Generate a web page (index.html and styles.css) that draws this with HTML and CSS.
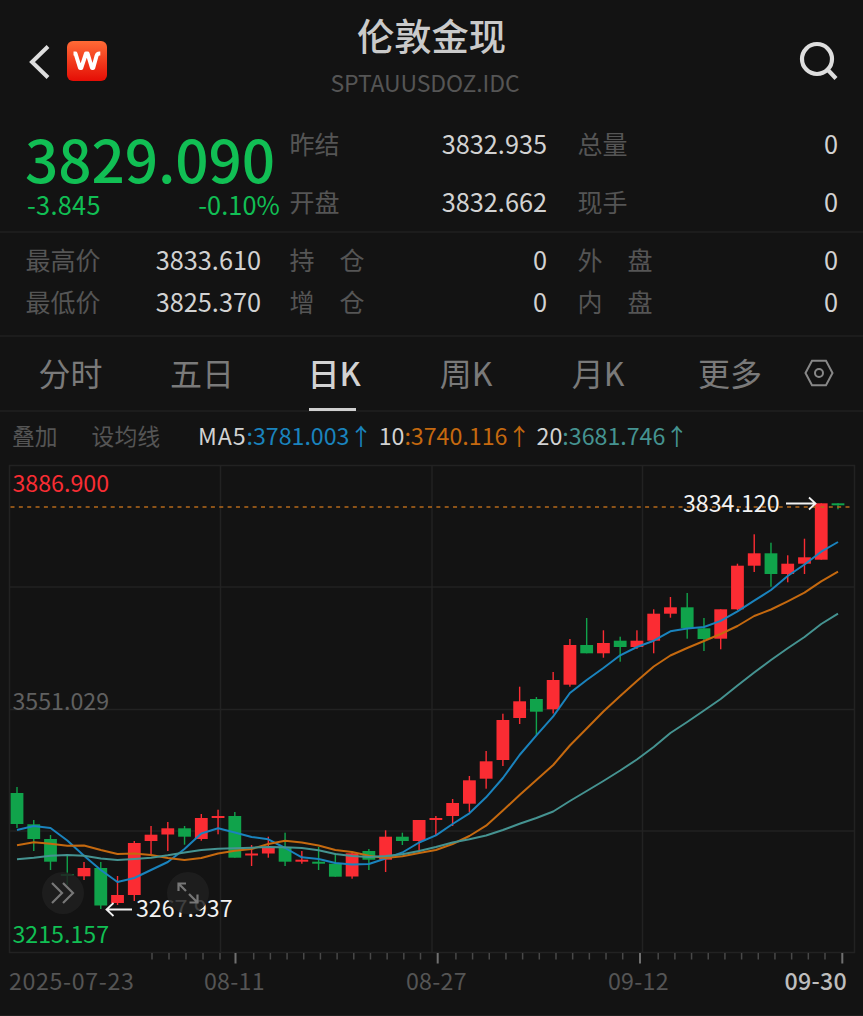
FILE: index.html
```
<!DOCTYPE html>
<html lang="zh-CN">
<head>
    <meta charset="UTF-8">
    <meta name="viewport" content="width=device-width, initial-scale=1.0">
    <title>伦敦金现</title>
    <link rel="stylesheet" href="styles.css">
</head>
<body>
    <header class="header">
        <div class="header-left">
            <svg class="back" width="22" height="36" viewBox="0 0 22 36"><path d="M20 2.5 4 18l16 15.500" /></svg>
            <svg class="logo" width="40" height="40" viewBox="0 0 40 40">
                <defs>
                    <linearGradient id="logo-bg" x1="0" y1="0" x2="0" y2="1">
                        <stop offset="0" stop-color="#ff6b36" />
                        <stop offset="1" stop-color="#e50d05" />
                    </linearGradient>
                </defs>
                <rect width="40" height="40" rx="6" fill="url(#logo-bg)" />
                <path d="M6.500 12.500h2L13 27h1.200L19 12.500h1.600L25 27h1.200L29.500 15q.7-2.500 3-2.500h.8" />
            </svg>
        </div>
        <div class="title">
            <h1>伦敦金现</h1>
            <p>SPTAUUSDOZ.IDC</p>
        </div>
        <svg class="search" width="40" height="40" viewBox="0 0 40 40"><circle cx="18" cy="18" r="15" /><path d="m28 28 9 9.500" /></svg>
    </header>

    <section class="quote">
        <div class="price down">
            <div class="last">3829.090</div>
            <div class="change"><span>-3.845</span><span>-0.10%</span></div>
        </div>
        <dl class="col">
            <div><dt>昨结</dt><dd>3832.935</dd></div>
            <div><dt>开盘</dt><dd>3832.662</dd></div>
        </dl>
        <dl class="col">
            <div><dt>总量</dt><dd>0</dd></div>
            <div><dt>现手</dt><dd>0</dd></div>
        </dl>
    </section>

    <section class="quote detail">
        <dl class="col first">
            <div><dt>最高价</dt><dd>3833.610</dd></div>
            <div><dt>最低价</dt><dd>3825.370</dd></div>
        </dl>
        <dl class="col">
            <div><dt>持　仓</dt><dd>0</dd></div>
            <div><dt>增　仓</dt><dd>0</dd></div>
        </dl>
        <dl class="col">
            <div><dt>外　盘</dt><dd>0</dd></div>
            <div><dt>内　盘</dt><dd>0</dd></div>
        </dl>
    </section>

    <nav class="tabs">
        <a>分时</a>
        <a>五日</a>
        <a class="active">日K</a>
        <a>周K</a>
        <a>月K</a>
        <a>更多</a>
        <svg class="settings" width="30" height="28" viewBox="0 0 30 28"><path d="M8 1.800h14L28.500 14 22 26.200H8L1.500 14z" /><circle cx="15" cy="14" r="4" /></svg>
    </nav>

    <div class="ma">
        <span class="link">叠加</span>
        <span class="link">设均线</span>
        <span class="avg"><span class="name">MA5</span><b class="ma5">:3781.003<i>↑</i></b></span>
        <span class="avg">10<b class="ma10">:3740.116<i>↑</i></b></span>
        <span class="avg">20<b class="ma20">:3681.746<i>↑</i></b></span>
    </div>

    <div class="chart">
        <svg id="kline" width="863" height="506" viewBox="0 460 863 506">
            <g id="grid" class="grid">
                <path d="M9.500 465.500H854.500V952.500H9.500zM220.500 465V952M432 465V952M642.500 465V952M10 587H854M10 709.500H854M10 831H854" />
            </g>
            <g id="ticks"></g>
            <g id="candles"></g>
            <g id="averages" class="averages"></g>
            <path class="current" d="M10.500 507H850" />
            <text class="up" x="12.500" y="491.700">3886.900</text>
            <text class="mid" x="12.500" y="709.700">3551.029</text>
            <text class="low" x="12.500" y="943">3215.157</text>
            <text class="mark" x="683" y="511.500">3834.120</text>
            <path class="arrow" d="M786 503.500h29M809 497.500l6.500 6-6.500 6" />
            <text class="mark" x="136" y="916.500">3267.937</text>
            <path class="arrow" d="M132 909.500h-25M113.500 903l-7 6.500 7 6.500" />
        </svg>
        <button class="round next"><svg width="26" height="24" viewBox="0 0 26 24"><path d="m2 2 10 10L2 22M13 2l10 10-10 10" /></svg></button>
        <button class="round expand"><svg width="24" height="24" viewBox="0 0 24 24"><path d="M2.500 10V2.500H10M3 3l7 7M13 13l8 8M21.500 13.500V21.500H13.500" /></svg></button>
    </div>

    <div class="dates">
        <span class="start">2025-07-23</span>
        <span>08-11</span>
        <span>08-27</span>
        <span>09-12</span>
        <span class="today">09-30</span>
    </div>

    <script src="chart.js"></script>
</body>
</html>
```
FILE: styles.css
```
* { box-sizing: border-box; margin: 0; padding: 0; }
body {
    width: 863px;
    height: 1016px;
    overflow: hidden;
    background: #131313;
    color: #d2d2d2;
    font-family: "Noto Sans CJK SC", "Noto Sans", sans-serif;
    font-size: 25.3px;
}
svg { display: block; fill: none; }

/* header */
.header { display: flex; justify-content: space-between; height: 114px; padding: 0 24px 0 28px; }
.header-left { display: flex; gap: 17px; width: 110px; padding-top: 41px; }
.back { margin-top: 3px; stroke: #dedede; stroke-width: 4; }
.logo path { stroke: #fff; stroke-width: 4; stroke-linejoin: round; }
.title { text-align: center; margin-left: -28px; }
.title h1 { font-size: 37.3px; font-weight: 500; line-height: 44px; margin-top: 13px; color: #cacaca; }
.title p { font-size: 23px; line-height: 28px; margin: 11px 13px 0 0; color: #555; letter-spacing: -0.1px; white-space: nowrap; }
.header .search { margin: 41px 0 0 46px; stroke: #dedede; stroke-width: 4.200; }

/* quote */
.quote { display: grid; grid-template-columns: 254px 257px 260px; column-gap: 10px; height: 119px; padding-left: 26px; border-bottom: 2px solid #1c1c1c; }
.quote .col:last-child { margin-left: 21px; width: 260px; }
.down { color: #11bf54; }
.last { font-size: 58.500px; font-weight: 500; line-height: 72px; height: 74px; padding-top: 8px; margin-left: -1px; letter-spacing: -0.1px; }
.change { display: flex; justify-content: space-between; line-height: 32px; }
.change span { letter-spacing: 0.1px; }
.change span:first-child { padding-left: 1px; letter-spacing: 0.3px; }
.col div { display: flex; justify-content: space-between; height: 58px; line-height: 58px; }
dt { color: #555; font-size: 25px; margin-left: -0.500px; }
.detail { height: 104px; padding-top: 5px; }
.detail .col div { height: 42px; line-height: 42px; }
.detail .first { width: 235px; }

/* tabs */
.tabs { display: grid; grid-template-columns: 141px 132px 129px 132px 132px 132px auto; height: 75px; border-bottom: 2px solid #1c1c1c; }
.tabs a { position: relative; text-align: center; font-size: 32px; line-height: 70px; color: #7a7a7a; }
.tabs a:nth-child(2) { padding-right: 10px; }
.tabs .active { color: #d2d2d2; font-weight: 500; padding-right: 7px; }
.tabs a:nth-child(n+4) { padding-right: 4px; }
.tabs .active::after { content: ""; position: absolute; left: 36px; bottom: -1px; width: 47px; height: 3px; background: #cfcfcf; }
.settings { margin: 22px 0 0 6px; stroke: #888; stroke-width: 2; }

/* moving averages */
.ma { display: flex; height: 48px; padding-left: 12px; font-size: 23.2px; line-height: 47px; white-space: nowrap; }
.ma .link { color: #555; margin-right: 34px; font-size: 22.800px; }
.ma .link + .link { margin-right: 38px; }
.ma .avg { margin-right: 6px; }
.ma .name { letter-spacing: 0.9px; }
.ma b, .ma i { font-weight: 400; font-style: normal; }
.ma5 { color: #1a83bd; }
.ma10 { color: #c5690f; }
.ma20 { color: #459391; }

/* chart */
.chart { position: relative; height: 506px; }
.chart text { font-size: 23.2px; }
.grid { stroke: #222; stroke-width: 1.500; }
.tick { stroke: #484848; stroke-width: 1.500; }
.tick.major { stroke: #707070; stroke-width: 2; }
.candle-up { fill: #fb2c33; }
.candle-down { fill: #10a34b; }
.averages polyline { stroke-width: 2; stroke-linejoin: round; }
.line5 { stroke: #1a83bd; }
.line10 { stroke: #c5690f; }
.line20 { stroke: #459391; }
.current { stroke: #b5691b; stroke-width: 1.500; stroke-dasharray: 4 4.350; }
.up { fill: #f92d33; }
.mid { fill: #606060; }
.low { fill: #11bf54; }
.mark { fill: #f2f2f2; }
.arrow { stroke: #f2f2f2; stroke-width: 1.800; }
.round { position: absolute; top: 412px; display: flex; align-items: center; justify-content: center; width: 42px; height: 42px; border: 0; border-radius: 50%; background: rgba(32, 32, 32, 0.85); }
.round path { stroke: #777; stroke-width: 2.200; }
.next { left: 42px; }
.expand { left: 167px; }

/* date axis */
.dates { display: grid; grid-template-columns: 195px 202px 202px 150px auto; padding: 0 16px 0 9px; height: 50px; line-height: 28px; font-size: 23.2px; color: #555; border-bottom: 1px solid #1e1e1e; letter-spacing: 0.25px; }
.dates .start { letter-spacing: 0.65px; }
.dates .today { color: #bebebe; text-align: right; font-weight: 500; }
```
FILE: chart.js
```
const NS = 'http://www.w3.org/2000/svg';
const STEP = 16.755;
const xAt = (i) => 17 + i * STEP;

// [direction, body top, body bottom, high, low]
const candles = [
    ['d', 793, 824, 787, 828], ['d', 824.3, 839, 820, 851], ['d', 839, 861.7, 835, 870], ['d', 874, 876, 855.7, 885],
    ['u', 868, 876.3, 862, 880], ['d', 868, 905.5, 862, 909], ['u', 895, 903, 876, 905], ['u', 843, 895, 841, 901],
    ['u', 834.7, 841, 826, 854], ['u', 828.3, 834.5, 822, 851], ['d', 828.3, 836.7, 826, 844.7], ['u', 818, 839, 814, 840.7],
    ['u', 816, 818, 809.7, 834.3], ['d', 816, 857.7, 812, 857.7], ['u', 853.5, 855.5, 845, 866], ['u', 847.3, 853.5, 836.7, 857.7],
    ['d', 847.3, 861.7, 832.7, 866], ['u', 859.7, 861.7, 851, 863.7], ['d', 861.7, 863.7, 847, 870], ['d', 863.7, 876.7, 853, 876.7],
    ['u', 853.3, 876.5, 851.7, 878.7], ['d', 851, 859.7, 849, 870], ['u', 836.7, 859.7, 830.3, 872], ['d', 836.7, 841, 832.7, 845],
    ['u', 820, 841, 820, 851], ['u', 818, 820, 816, 835], ['u', 803, 816, 799, 826], ['u', 780.3, 803.7, 776, 812],
    ['u', 761.3, 778.7, 751, 788.7], ['u', 720, 760, 713.7, 766], ['u', 701.3, 718, 686.7, 724], ['d', 699, 711.7, 697, 735.3],
    ['u', 680, 709.3, 672, 713.5], ['u', 645, 684.7, 639, 686.7], ['d', 645, 653.3, 618, 653.3], ['u', 643, 653.3, 630.3, 657.7],
    ['d', 640.7, 647, 636.7, 661.7], ['u', 640.7, 647, 630.3, 649], ['u', 613.7, 640.7, 609.3, 653.3], ['u', 607.3, 613.7, 597, 617.7],
    ['d', 607.3, 628.3, 593, 638.7], ['d', 628.3, 639, 618, 651], ['u', 609.3, 638.7, 609.3, 649.3], ['u', 565.7, 609.3, 563.7, 610],
    ['u', 553.3, 565.7, 534.3, 572], ['d', 553.3, 574, 542.7, 586.7], ['u', 563.7, 574, 555.3, 582.3], ['u', 557.3, 563.7, 538.7, 574],
    ['u', 503.3, 559.7, 503.3, 559.7], ['d', 503.3, 505.3, 503.3, 509.3]
];

const averages = {
    line5: [830, 826, 828, 840.5, 855.7, 870, 882, 878, 870, 862, 849, 833.5, 828.3, 832.5, 837, 839.3, 848, 857.3, 859, 863,
        864.5, 864, 858.5, 852.5, 842.5, 835.3, 824, 813.3, 797.3, 778, 755, 735.3, 716.3, 693, 680, 668, 655.3, 647, 640.7, 631.3,
        628.5, 627, 620.9, 611.3, 600.7, 590, 576, 564.5, 551.7, 542],
    line10: [845.3, 842.3, 843.7, 845.7, 845.5, 850, 854, 853.5, 855, 858, 860, 858, 853.5, 850.7, 849, 844, 840.7, 842.5, 845.5, 850,
        852, 855.7, 858, 856.3, 853, 850, 844, 836, 825.7, 810.5, 795, 780, 765, 745.5, 728.5, 711.5, 696, 681, 666.5, 655.5,
        648, 641, 634, 626, 616, 609.5, 601.3, 592.7, 581.3, 571.7],
    line20: [859.3, 857.7, 855.7, 855, 855.7, 858.5, 860, 859, 857.7, 855.3, 852.5, 850, 848.7, 848.3, 847.7, 847, 847.3, 848, 850.3, 854,
        856, 857, 856, 854.3, 851, 847, 842.5, 839.3, 835.5, 830, 823.7, 818, 811.5, 801, 791, 781, 770.5, 759.5, 747, 733,
        722, 710.5, 699, 685.5, 672.5, 660, 648.3, 637, 624, 613.7]
};

function add(parent, tag, attrs) {
    const el = document.createElementNS(NS, tag);
    for (const key in attrs) el.setAttribute(key, attrs[key]);
    document.getElementById(parent).appendChild(el);
}

candles.forEach(([dir, top, bottom, high, low], i) => {
    const cls = dir === 'u' ? 'candle-up' : 'candle-down';
    add('candles', 'rect', { class: cls, x: xAt(i) - 0.7, y: high, width: 1.4, height: low - high });
    add('candles', 'rect', { class: cls, x: xAt(i) - 6.4, y: top, width: 12.8, height: bottom - top });
});

for (const name in averages) {
    const points = averages[name].map((y, i) => xAt(i).toFixed(1) + ',' + y).join(' ');
    add('averages', 'polyline', { class: name, points: points });
}

// short ticks for each day, long ones above the date labels
function tick(x, length, cls) {
    add('ticks', 'path', { class: cls, d: `M${x} 953v${length}` });
}
for (let i = 0; i < 5; i++) tick(152 + i * 17, 6.5, 'tick');
[235.5, 437.7, 640].forEach((x) => {
    tick(x, 10.5, 'tick major');
    for (let i = 0; i < 11; i++) tick(x + 18.2 + i * 16.68, 6.5, 'tick');
});
tick(842.3, 10.5, 'tick major');
```
